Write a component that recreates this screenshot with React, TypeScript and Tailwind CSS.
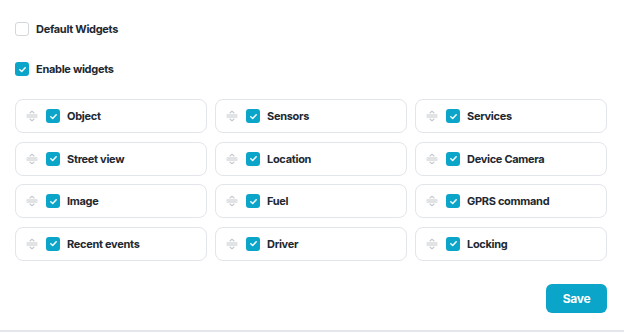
import React from 'react';

const widgets = [
  'Object', 'Sensors', 'Services',
  'Street view', 'Location', 'Device Camera',
  'Image', 'Fuel', 'GPRS command',
  'Recent events', 'Driver', 'Locking',
];

const Check = ({ checked }: { checked: boolean }) =>
  checked ? (
    <span className="flex h-[14px] w-[14px] items-center justify-center rounded-[3px] bg-[#0ba5c9]">
      <svg width="9" height="9" viewBox="0 0 10 10" fill="none">
        <path d="M2 5.2 L4.1 7.2 L8 3" stroke="white" strokeWidth="1.6" strokeLinecap="round" strokeLinejoin="round" />
      </svg>
    </span>
  ) : (
    <span className="block h-[14px] w-[14px] rounded-[3px] border border-[#d4d7dc] bg-white" />
  );

const DragHandle = () => (
  <svg width="12" height="12" viewBox="0 0 12 12" fill="none" stroke="#c3c7cc" strokeWidth="1.1" strokeLinecap="round" strokeLinejoin="round">
    <path d="M4 3 L6 1.2 L8 3" />
    <path d="M1 5 H11" />
    <path d="M1 7 H11" />
    <path d="M4 9 L6 10.8 L8 9" />
  </svg>
);

export default function App() {
  return (
    <div className="w-[624px] bg-white font-['Inter',sans-serif] text-[11px] font-bold leading-[14px] tracking-[-0.3px] text-[#222831]">
      <div className="border-b-2 border-[#e3e6ea] px-[15px] pb-[17px] pt-[22px]">
        <label className="flex items-center gap-[7px]">
          <Check checked={false} />
          <span>Default Widgets</span>
        </label>
        <label className="mt-[26px] flex items-center gap-[7px]">
          <Check checked />
          <span>Enable widgets</span>
        </label>

        <div className="mt-[23px] grid w-[592px] grid-cols-3 gap-x-[8px] gap-y-[8.5px]">
          {widgets.map((w) => (
            <div key={w} className="flex h-[34px] items-center rounded-[8px] border border-[#e2e5e9] pl-[10px]">
              <DragHandle />
              <span className="ml-[8px]"><Check checked /></span>
              <span className="ml-[7px]">{w}</span>
            </div>
          ))}
        </div>

        <div className="mt-[23.5px] flex w-[592px] justify-end">
          <button className="h-[29px] w-[61px] rounded-[6px] bg-[#0ba5c9] text-[12px] font-bold text-white">Save</button>
        </div>
      </div>
    </div>
  );
}
